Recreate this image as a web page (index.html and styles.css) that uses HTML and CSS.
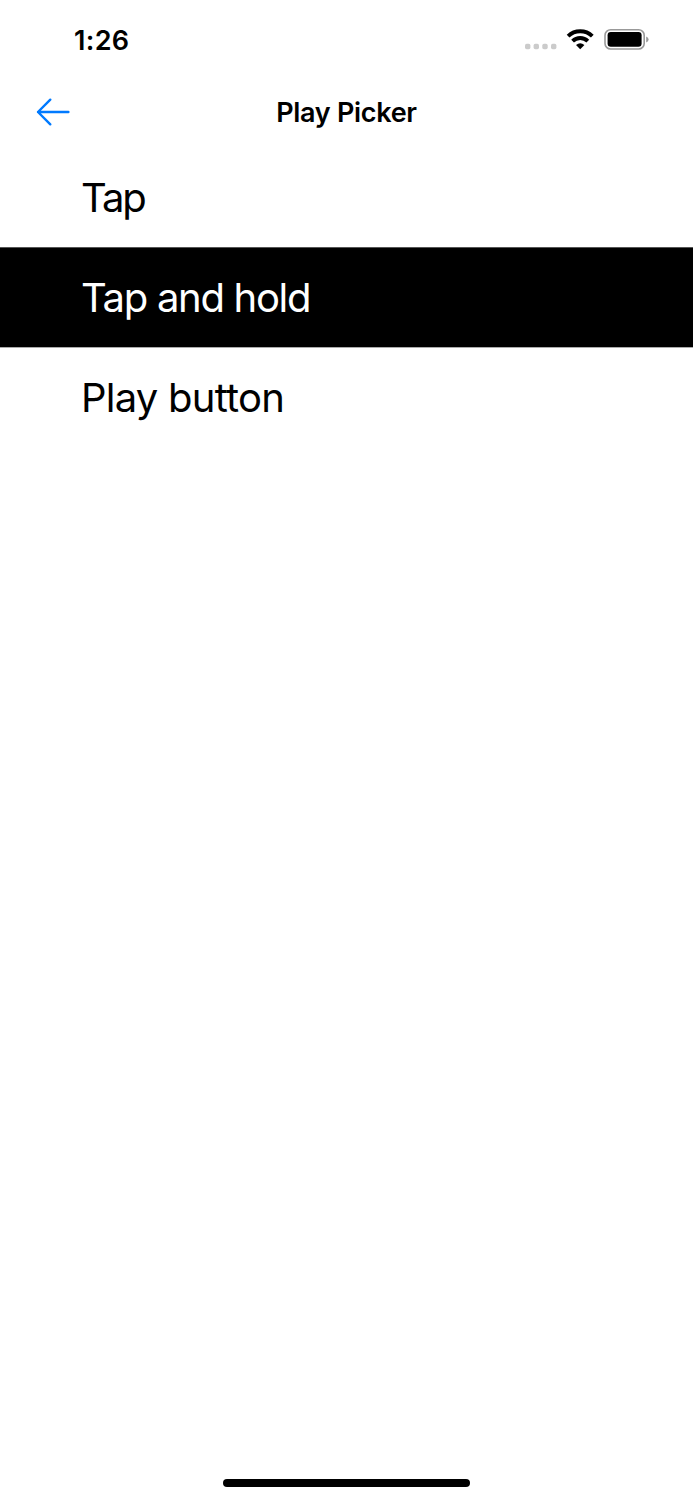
FILE: index.html
```html
<!DOCTYPE html>
<html lang="en">
<head>
<meta charset="utf-8">
<title>Play Picker</title>
<link rel="stylesheet" href="styles.css">
</head>
<body>
<div class="screen">
  <header class="status">
    <span class="time">1:26</span>
    <svg class="indicators" width="130" height="30" viewBox="520 25 130 30" aria-hidden="true">
      <g fill="#cbcbcb">
        <rect x="525" y="43.8" width="5.4" height="5.4" rx="1.7"/>
        <rect x="533.6" y="43.8" width="5.4" height="5.4" rx="1.7"/>
        <rect x="542.3" y="43.8" width="5.4" height="5.4" rx="1.7"/>
        <rect x="551" y="43.8" width="5.4" height="5.4" rx="1.7"/>
      </g>
      <g fill="none" stroke="#000" stroke-width="3.9">
        <path d="M568.1 36.2A17.3 17.3 0 0 1 592.3 36.2"/>
        <path d="M572.6 41.2A10.8 10.8 0 0 1 587.8 41.2"/>
      </g>
      <path d="M580.2 49.3L576 45.1Q580.2 41.5 584.4 45.1Z"/>
      <rect x="605" y="29.8" width="39.2" height="19.2" rx="5.6" fill="none" stroke="#999" stroke-width="1.6"/>
      <rect x="607.6" y="32" width="34" height="14.8" rx="3.2"/>
      <path d="M646.2 36.4Q648.6 37.2 648.6 39.4T646.2 42.4Z" fill="#999"/>
    </svg>
  </header>
  <nav class="navbar">
    <svg class="back" width="36" height="30" viewBox="35 97 36 30" aria-label="Back">
      <path d="M50.3 99.7L38 112L50.3 124.3M38 112H68.4" fill="none" stroke="#007aff" stroke-width="2.4" stroke-linecap="round" stroke-linejoin="round"/>
    </svg>
    <h1 class="title">Play Picker</h1>
  </nav>
  <ul class="options">
    <li class="option tap">Tap</li>
    <li class="option hold selected">Tap and hold</li>
    <li class="option button">Play button</li>
  </ul>
  <div class="home-indicator"></div>
</div>
</body>
</html>
```
FILE: styles.css
```css
body {
  margin: 0;
  background: #fff;
  color: #000;
  font-family: Inter, "Liberation Sans", sans-serif;
}

.screen {
  display: flex;
  flex-direction: column;
  width: 693px;
  height: 1500px;
  overflow: hidden;
}

.status {
  display: flex;
  justify-content: space-between;
  box-sizing: border-box;
  height: 77px;
  padding: 25px 43px 0 74px;
}

.time {
  font-size: 27px;
  font-weight: 600;
  line-height: 32px;
  letter-spacing: 0.3px;
}

.navbar {
  display: grid;
  grid-template-columns: 36px 1fr 36px;
  align-items: center;
  height: 70px;
  padding: 0 35px;
}

.title {
  margin: 0;
  padding-top: 2px;
  font-size: 27px;
  font-weight: 600;
  line-height: 32px;
  letter-spacing: -0.3px;
  text-align: center;
}

.options {
  flex: 1;
  margin: 0;
  padding: 0;
  list-style: none;
}

.option {
  box-sizing: border-box;
  height: 100px;
  padding-left: 81px;
  font-size: 40px;
  line-height: 101px;
}

.tap {
  letter-spacing: -2px;
}

.hold {
  letter-spacing: -1.3px;
}

.button {
  letter-spacing: -0.75px;
}

.selected {
  background: #000;
  color: #fff;
  box-shadow: inset 0 1px #555, 0 1px #aaa;
}

.home-indicator {
  width: 247px;
  height: 8px;
  margin: 0 auto 13px;
  border-radius: 4px;
  background: #000;
}
```
